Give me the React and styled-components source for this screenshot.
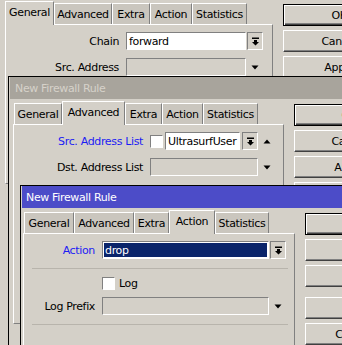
import React from 'react'
import styled, {createGlobalStyle} from 'styled-components'

const Global = createGlobalStyle`
  body {
    margin: 0;
  }
`

const Desktop = styled.div`
  position: relative;
  width: 342px;
  height: 345px;
  overflow: hidden;
  background: #d4d0c8;
  font-family: "DejaVu Sans", sans-serif;
  font-size: 11px;
  letter-spacing: -0.35px;
  color: #000;
`

// a dialog window lying on the desktop
const Frame = styled.div`
  position: absolute;
  left: ${p => p.$x}px;
  top: ${p => p.$y}px;
  width: 440px;
  height: 420px;
  box-sizing: border-box;
  background: #d4d0c8;
  border-top: 1px solid #000;
  border-left: 1px solid #000;
  padding-left: 1px;
`
const TitleBar = styled.div`
  height: 22px;
  display: flex;
  align-items: center;
  padding-left: ${p => p.$pad}px;
  background: ${p => p.$active ? '#4c4cc8' : '#a8a49c'};
  color: ${p => p.$active ? '#ffffff' : '#d6d2ca'};
`
const Body = styled.div`
  display: flex;
  align-items: flex-start;
  padding: 2px 0 0 ${p => p.$left}px;
  gap: 10px;
`
const Main = styled.div`
  flex: none;
  width: ${p => p.$w}px;
`
const TabStrip = styled.div`
  position: relative;
  z-index: 1;
  display: flex;
  align-items: flex-end;
  height: 23px;
  padding-left: ${p => p.$off}px;
`
const Tab = styled.div`
  flex: none;
  width: ${p => p.$w}px;
  height: ${p => p.$active ? 24 : 21}px;
  margin-bottom: ${p => p.$active ? -1 : 0}px;
  padding-bottom: ${p => p.$active ? 2 : 0}px;
  box-sizing: border-box;
  display: flex;
  align-items: center;
  justify-content: center;
  background: ${p => p.$active ? '#d4d0c8' : '#cac6be'};
  border-top: 1px solid #fff;
  border-left: 1px solid #fff;
  border-right: 1px solid #808080;
  white-space: nowrap;
`
const Panel = styled.div`
  height: ${p => p.$h}px;
  box-sizing: border-box;
  border-top: 1px solid #fff;
  border-left: 1px solid #fff;
  border-right: 1px solid #808080;
  border-bottom: 1px solid #808080;
  padding-top: 7px;
`
const Row = styled.div`
  display: flex;
  align-items: center;
  height: 18px;
  margin-bottom: ${p => p.$mb ?? 8}px;
`
const Label = styled.div`
  flex: none;
  width: ${p => p.$w}px;
  box-sizing: border-box;
  padding-right: 7px;
  text-align: right;
  white-space: nowrap;
  color: ${p => p.$blue ? '#1c1cf4' : '#000'};
`
const Field = styled.div`
  flex: none;
  width: ${p => p.$w}px;
  height: 18px;
  box-sizing: border-box;
  display: flex;
  align-items: center;
  padding-left: 2px;
  margin-right: ${p => p.$mr ?? 1}px;
  border-top: 1px solid #808080;
  border-left: 1px solid #808080;
  border-bottom: 1px solid #fff;
  border-right: 1px solid #fff;
  background: ${p => p.$tone === 'white' ? '#fff' : p.$tone === 'selected' ? '#0a246a' : '#d4d0c8'};
  color: ${p => p.$tone === 'selected' ? '#fff' : '#000'};
  box-shadow: ${p => p.$tone === 'selected' ? 'inset 0 0 0 1px #fff' : 'none'};
  white-space: nowrap;
  overflow: hidden;
`
const DropBtn = styled.div`
  flex: none;
  width: 16px;
  height: 18px;
  box-sizing: border-box;
  display: flex;
  align-items: center;
  justify-content: center;
  border-top: 1px solid #808080;
  border-left: 1px solid #808080;
  border-bottom: 1px solid #fff;
  border-right: 1px solid #fff;
`
const ArrowSlot = styled.div`
  flex: none;
  width: 16px;
  height: 18px;
  display: flex;
  align-items: center;
  justify-content: center;
`
const Check = styled.div`
  flex: none;
  width: 13px;
  height: 13px;
  box-sizing: border-box;
  margin-right: ${p => p.$mr}px;
  background: #fff;
  border-top: 1px solid #808080;
  border-left: 1px solid #808080;
  border-bottom: 1px solid #fff;
  border-right: 1px solid #fff;
`
const Spacer = styled.div`
  flex: none;
  width: ${p => p.$w}px;
`
const Separator = styled.div`
  margin: 9px 0 5px ${p => p.$left}px;
  width: ${p => p.$w}px;
  border-top: 1px solid #b8b4ac;
`
const ButtonCol = styled.div`
  display: flex;
  flex-direction: column;
  gap: 4px;
  padding-top: 3px;
`
const Button = styled.div`
  width: ${p => p.$w}px;
  height: 22px;
  box-sizing: border-box;
  display: flex;
  align-items: center;
  justify-content: center;
  margin-bottom: ${p => p.$mb ?? 0}px;
  border: 1px solid;
  border-color: ${p => p.$default ? '#000' : '#fff #404040 #404040 #fff'};
  box-shadow: ${p => p.$default
    ? 'inset 1px 1px 0 #fff, inset -1px -1px 0 #404040, inset -2px -2px 0 #808080'
    : 'inset -1px -1px 0 #808080'};
  white-space: nowrap;
`

const DropIcon = () => (
  <svg width="9" height="9" viewBox="0 0 9 9">
    <rect x="1" y="0.5" width="7" height="1.5" fill="#000" />
    <path d="M3 3 H6 V5 H8 L4.5 8.5 L1 5 H3 Z" fill="#000" />
  </svg>
)

const Tri = ({up}) => (
  <svg width="8" height="5" viewBox="0 0 8 5">
    <path d={up ? 'M0.5 4.5 H7.5 L4 0.5 Z' : 'M0.5 0.5 H7.5 L4 4.5 Z'} fill="#000" />
  </svg>
)

const TAB_NAMES = ['General', 'Advanced', 'Extra', 'Action', 'Statistics']

const RuleWindow = ({x, y, title, titlePad, bodyLeft, panelW, panelH, tabOff, tabWidths, activeTab, buttonW, buttons, children}) => (
  <Frame $x={x} $y={y}>
    {title && <TitleBar $active={title === 'active'} $pad={titlePad}>New Firewall Rule</TitleBar>}
    <Body $left={bodyLeft}>
      <Main $w={panelW}>
        <TabStrip $off={tabOff}>
          {TAB_NAMES.map((name, i) => (
            <Tab key={name} $w={tabWidths[i]} $active={i === activeTab}>{name}</Tab>
          ))}
        </TabStrip>
        <Panel $h={panelH}>{children}</Panel>
      </Main>
      <ButtonCol>
        {buttons.map((b, i) => (
          <Button key={i} $w={buttonW} $default={i === 0} $mb={b.mb}>{b.label}</Button>
        ))}
      </ButtonCol>
    </Body>
  </Frame>
)

const App = () => {
  return (
    <Desktop>
      <Global />
      <RuleWindow
        x={-6}
        y={-2}
        bodyLeft={9}
        panelW={268}
        panelH={160}
        tabOff={0}
        tabWidths={[49, 58, 38, 42, 55]}
        activeTab={0}
        buttonW={112}
        buttons={[{label: 'OK'}, {label: 'Cancel'}, {label: 'Apply'}, {label: 'Disable'}]}>
        <Row>
          <Label $w={120}>Chain</Label>
          <Field $w={120} $tone="white">forward</Field>
          <DropBtn><DropIcon /></DropBtn>
        </Row>
        <Row>
          <Label $w={120}>Src. Address</Label>
          <Field $w={120} />
          <ArrowSlot><Tri /></ArrowSlot>
        </Row>
      </RuleWindow>

      <RuleWindow
        x={8}
        y={76}
        title="inactive"
        titlePad={5}
        bodyLeft={3}
        panelW={271}
        panelH={200}
        tabOff={1}
        tabWidths={[48, 63, 37, 41, 55]}
        activeTab={1}
        buttonW={110}
        buttons={[{label: 'OK'}, {label: 'Cancel'}, {label: 'Apply'}, {label: 'Disable'}]}>
        <Row>
          <Label $w={136} $blue>Src. Address List</Label>
          <Check $mr={2} />
          <Field $w={75} $tone="white" $mr={2}>UltrasurfUser</Field>
          <DropBtn><DropIcon /></DropBtn>
          <Spacer $w={1} />
          <ArrowSlot><Tri up /></ArrowSlot>
        </Row>
        <Row>
          <Label $w={136}>Dst. Address List</Label>
          <Field $w={108} />
          <ArrowSlot><Tri /></ArrowSlot>
        </Row>
      </RuleWindow>

      <RuleWindow
        x={20}
        y={185}
        title="active"
        titlePad={4}
        bodyLeft={1}
        panelW={272}
        panelH={300}
        tabOff={1}
        tabWidths={[50, 60, 35, 46, 54]}
        activeTab={3}
        buttonW={112}
        buttons={[{label: 'OK'}, {label: 'Cancel'}, {label: 'Apply', mb: 6}, {label: 'Disable'}, {label: 'Comment'}, {label: 'Copy'}]}>
        <Row $mb={0}>
          <Label $w={78} $blue>Action</Label>
          <Field $w={167} $tone="selected">drop</Field>
          <DropBtn><DropIcon /></DropBtn>
        </Row>
        <Separator $left={8} $w={256} />
        <Row $mb={5}>
          <Spacer $w={78} />
          <Check $mr={4} />
          <span>Log</span>
        </Row>
        <Row $mb={0}>
          <Label $w={78}>Log Prefix</Label>
          <Field $w={167} />
          <ArrowSlot><Tri /></ArrowSlot>
        </Row>
        <Separator $left={8} $w={256} />
      </RuleWindow>
    </Desktop>
  )
}

export default App
